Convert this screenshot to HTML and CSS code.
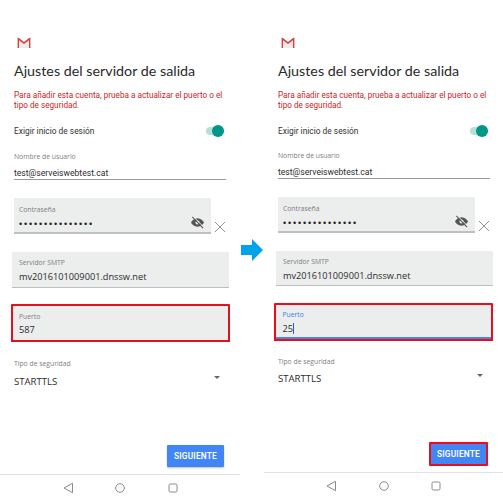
FILE: index.html
```html
<!DOCTYPE html>
<html lang="es">
<head>
<meta charset="utf-8">
<title>Ajustes del servidor de salida</title>
<link rel="stylesheet" href="styles.css">
</head>
<body>
<main class="screens">
  <section class="phone">
    <svg class="gmail" viewBox="0 0 14 11"><path d="M1 1.500 7 6l6-4.500V11H1z" fill="#ececec"/><path d="M0.600 11V0.700L1.600 0.700 7 5 12.400 0.700 13.400 0.700V11H12V3.300L7 7 2 3.300V11z" fill="#d9403a"/></svg>
    <h1 class="title">Ajustes del servidor de salida</h1>
    <p class="error">Para añadir esta cuenta, prueba a actualizar el puerto o el tipo de seguridad.</p>
    <div class="switch-row"><span>Exigir inicio de sesión</span><span class="switch"><i class="knob"></i></span></div>
    <div class="plain-field"><label class="label">Nombre de usuario</label><div class="value email">test@serveiswebtest.cat</div></div>
    <div class="password-row">
      <div class="box password"><label class="label">Contraseña</label><div class="dots">•••••••••••••••</div>
        <svg class="eye" viewBox="0 0 16 14"><path d="M8 2.500C4.500 2.500 2 5 1 7c1 2 3.500 4.500 7 4.500S14 9 15 7c-1-2-3.500-4.500-7-4.500z" fill="#555"/><circle cx="8" cy="7" r="2.200" fill="#eceded"/><path d="M2.500 1 14 13" stroke="#555" stroke-width="1.300"/><path d="M3.600 0.700 15 12.200" stroke="#eceded" stroke-width="1"/></svg>
      </div>
      <svg class="close" viewBox="0 0 12 12"><path d="M1 1 11 11M11 1 1 11" stroke="#777" stroke-width="0.800" fill="none"/></svg>
    </div>
    <div class="box smtp"><label class="label">Servidor SMTP</label><div class="value">mv2016101009001.dnssw.net</div></div>
    <div class="box port"><label class="label">Puerto</label><div class="value">587</div></div>
    <div class="select-field"><label class="label">Tipo de seguridad</label><div class="select"><span class="value stls">STARTTLS</span><i class="caret"></i></div></div>
    <div class="actions"><button class="next">SIGUIENTE</button></div>
    <nav class="nav">
      <svg viewBox="0 0 12 12"><path d="M10.500 1.300V10.700L2 6z" fill="none" stroke="#8a8a8a" stroke-width="1"/></svg>
      <svg viewBox="0 0 12 12"><circle cx="6" cy="6" r="4.300" fill="none" stroke="#8a8a8a" stroke-width="1"/></svg>
      <svg viewBox="0 0 12 12"><rect x="2" y="2" width="8" height="8" rx="1.300" fill="none" stroke="#8a8a8a" stroke-width="1"/></svg>
    </nav>
  </section>
  <section class="phone phone-after">
    <svg class="gmail" viewBox="0 0 14 11"><path d="M1 1.500 7 6l6-4.500V11H1z" fill="#ececec"/><path d="M0.600 11V0.700L1.600 0.700 7 5 12.400 0.700 13.400 0.700V11H12V3.300L7 7 2 3.300V11z" fill="#d9403a"/></svg>
    <h1 class="title">Ajustes del servidor de salida</h1>
    <p class="error">Para añadir esta cuenta, prueba a actualizar el puerto o el tipo de seguridad.</p>
    <div class="switch-row"><span>Exigir inicio de sesión</span><span class="switch"><i class="knob"></i></span></div>
    <div class="plain-field"><label class="label">Nombre de usuario</label><div class="value email">test@serveiswebtest.cat</div></div>
    <div class="password-row">
      <div class="box password"><label class="label">Contraseña</label><div class="dots">•••••••••••••••</div>
        <svg class="eye" viewBox="0 0 16 14"><path d="M8 2.500C4.500 2.500 2 5 1 7c1 2 3.500 4.500 7 4.500S14 9 15 7c-1-2-3.500-4.500-7-4.500z" fill="#555"/><circle cx="8" cy="7" r="2.200" fill="#eceded"/><path d="M2.500 1 14 13" stroke="#555" stroke-width="1.300"/><path d="M3.600 0.700 15 12.200" stroke="#eceded" stroke-width="1"/></svg>
      </div>
      <svg class="close" viewBox="0 0 12 12"><path d="M1 1 11 11M11 1 1 11" stroke="#777" stroke-width="0.800" fill="none"/></svg>
    </div>
    <div class="box smtp"><label class="label">Servidor SMTP</label><div class="value">mv2016101009001.dnssw.net</div></div>
    <div class="box port"><label class="label">Puerto</label><div class="value">25<i class="cursor"></i></div></div>
    <div class="select-field"><label class="label">Tipo de seguridad</label><div class="select"><span class="value stls">STARTTLS</span><i class="caret"></i></div></div>
    <div class="actions"><button class="next">SIGUIENTE</button></div>
    <nav class="nav">
      <svg viewBox="0 0 12 12"><path d="M10.500 1.300V10.700L2 6z" fill="none" stroke="#8a8a8a" stroke-width="1"/></svg>
      <svg viewBox="0 0 12 12"><circle cx="6" cy="6" r="4.300" fill="none" stroke="#8a8a8a" stroke-width="1"/></svg>
      <svg viewBox="0 0 12 12"><rect x="2" y="2" width="8" height="8" rx="1.300" fill="none" stroke="#8a8a8a" stroke-width="1"/></svg>
    </nav>
  </section>
  <svg class="arrow" viewBox="0 0 22 22"><path d="M0 6H11V0L22 11 11 22V16H0z" fill="#00a2e8"/></svg>
</main>
</body>
</html>
```
FILE: styles.css
```css
* { box-sizing: border-box; }
html, body { margin: 0; padding: 0; background: #fff; }
body { width: 503px; height: 500px; overflow: hidden; font-family: "Open Sans", "Noto Sans", sans-serif; color: #222; }
.screens { position: relative; display: flex; gap: 24px; width: 503px; height: 500px; }
.phone { width: 240px; height: 500px; padding: 37px 0 0 14px; display: flex; flex-direction: column; align-items: flex-start; }
.phone-after { width: 239px; }
.gmail { width: 14px; height: 11px; margin-left: 3px; display: block; }
.title { margin: 13px 0 0; font-family: "Lato", sans-serif; font-size: 14.300px; line-height: 20px; font-weight: 400; color: #2a2a2a; white-space: nowrap; }
.error { margin: 10px 0 0; width: 214px; font-family: "Roboto", sans-serif; font-size: 8.200px; line-height: 9.500px; color: #c81e1e; }
.switch-row { display: flex; justify-content: space-between; align-items: center; width: 210px; height: 14px; margin-top: 14px; font-family: "Roboto", sans-serif; font-size: 8.400px; color: #333; }
.switch { position: relative; width: 18px; height: 8px; border-radius: 4px; background: #b5e0da; }
.knob { position: absolute; right: 0; top: -2px; width: 12px; height: 12px; border-radius: 50%; background: #009688; }
.plain-field { width: 212px; height: 28px; margin-top: 14px; border-bottom: 1px solid #999; }
.label { display: block; font-size: 6.800px; line-height: 9px; color: #808080; }
.value { font-size: 9.200px; line-height: 12px; color: #2c2c2c; white-space: nowrap; }
.email { font-family: "Roboto", sans-serif; font-size: 8.600px; }
.stls { font-size: 9.600px; }
.plain-field .value { margin-top: 6px; }
.password-row { display: flex; align-items: flex-end; width: 216px; margin-top: 18px; }
.box { position: relative; background: #eceded; border-radius: 1px 1px 0 0; }
.password { width: 197px; height: 36px; padding: 6.500px 0 0 5px; border-bottom: 2px solid #c0c0c0; }
.dots { font-family: "Liberation Sans", sans-serif; font-size: 9px; line-height: 10px; letter-spacing: 1.850px; margin-top: 5px; color: #222; }
.eye { position: absolute; right: 6.500px; bottom: 3px; width: 15px; height: 13px; }
.close { width: 12px; height: 12px; margin: 0 0 1px 3px; }
.smtp { width: 217px; height: 36px; margin: 18px 0 0 -2px; padding: 6px 0 0 7px; border-bottom: 1px solid #bdbdbd; }
.smtp .value { margin-top: 4px; }
.port { width: 219px; height: 38px; margin: 16px 0 0 -3px; padding: 5.500px 0 0 6px; border: 2px solid #e41020; }
.port .value { margin-top: 3.500px; }
.cursor { display: inline-block; width: 1px; height: 11px; vertical-align: -2px; background: #1c5fd4; }
.select-field { width: 212px; margin-top: 17px; }
.select { position: relative; margin-top: 8px; }
.select .value { display: block; }
.caret { position: absolute; right: 6.300px; top: 0; width: 0; height: 0; border: 3px solid transparent; border-top: 3.500px solid #666; border-bottom: 0; }
.actions { display: flex; justify-content: flex-end; width: 210px; margin-top: 57px; }
.next { width: 57px; height: 22px; padding: 0; border: 0; border-radius: 1px; background: #4285f4; color: #fff; font: 600 8.300px/22px "Roboto", sans-serif; letter-spacing: 0.200px; box-shadow: 0 1px 2px rgba(0,0,0,.25); }
.nav { display: flex; justify-content: center; gap: 40.500px; width: 240px; height: 26px; margin: 7px 0 0 -14px; padding-top: 7px; border-top: 1px solid #e2e2e2; }
.nav svg { width: 12px; height: 12px; }
.arrow { position: absolute; left: 241px; top: 239px; width: 22px; height: 22px; }

.phone-after .switch-row { margin-top: 13.500px; }
.phone-after .plain-field { margin-top: 13.500px; }
.phone-after .smtp { height: 35px; }
.phone-after .port { margin: 17px 0 0 -4px; padding: 5px 0 0 6.500px; border-color: #ee0c1c; box-shadow: inset 0 -2px 0 #3f8ae6; }
.phone-after .port .label { color: #3d7fe0; }
.phone-after .port .value { margin-top: 4px; }
.phone-after .select-field { margin-top: 16px; }
.phone-after .select { margin-top: 7px; }
.phone-after .caret { right: 7px; top: 0.500px; }
.phone-after .next { width: 59px; height: 24px; border: 2px solid #ee0c1c; line-height: 20px; box-shadow: none; }
.phone-after .nav { width: 239px; margin-top: 6px; }
```
